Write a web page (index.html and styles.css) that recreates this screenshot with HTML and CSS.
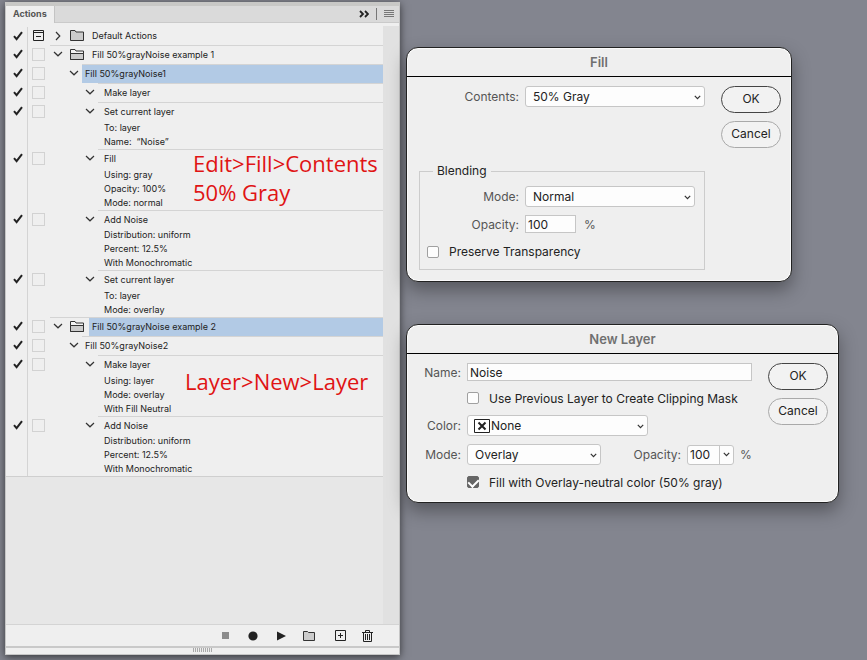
FILE: index.html
```html
<!DOCTYPE html>
<html lang="en">
<head>
    <meta charset="UTF-8">
    <meta name="viewport" content="width=device-width, initial-scale=1.0">
    <title>Fill 50% Gray Noise Actions</title>
    <link rel="stylesheet" href="styles.css">
</head>
<body>
    <svg class="defs" aria-hidden="true">
        <symbol id="check" viewBox="0 0 10 10"><path d="M1 5.2L3.6 8.2L9 1.2" fill="none" stroke="#222" stroke-width="2"/></symbol>
        <symbol id="down" viewBox="0 0 10 6"><path d="M1 1L5 4.8L9 1" fill="none" stroke="#333" stroke-width="1.2"/></symbol>
        <symbol id="right" viewBox="0 0 6 10"><path d="M1 1L4.8 5L1 9" fill="none" stroke="#333" stroke-width="1.2"/></symbol>
        <symbol id="caret" viewBox="0 0 7 5"><path d="M0.8 0.8L3.5 3.6L6.2 0.8" fill="none" stroke="#333" stroke-width="1.2"/></symbol>
        <symbol id="folder" viewBox="0 0 14 11"><path d="M.5 10.5V.5H5L6 2H13.5V10.5Z" fill="#ccc" stroke="#333"/></symbol>
        <symbol id="folder-open" viewBox="0 0 14 11"><path d="M.5 10.5V.5H5L6 2H13.5V10.5Z" fill="#f4f4f4" stroke="#333"/><path d="M.5 4.5H13.5V10.5H.5Z" fill="#ccc" stroke="#333"/></symbol>
    </svg>

    <section class="panel">
        <header class="tabs">
            <h2 class="tab">Actions</h2>
            <div class="tab-tools">
                <svg width="10" height="8" viewBox="0 0 10 8"><path d="M1 1L4 4L1 7M6 1L9 4L6 7" fill="none" stroke="#222" stroke-width="1.8"/></svg>
                <span class="divider"></span>
                <svg width="10" height="8" viewBox="0 0 10 8"><path d="M0 .5H10M0 2.5H10M0 4.5H10M0 6.5H10" stroke="#777"/></svg>
            </div>
        </header>

        <div class="content">
            <div class="list">
                <div class="row folder">
                    <span class="mark"><svg width="10" height="10"><use href="#check"/></svg></span>
                    <span class="modal"><svg width="11" height="11" viewBox="0 0 11 11"><path d="M.5 .5H10.5V10.5H.5ZM.5 2.5H10.5M3 6.5H8" fill="none" stroke="#222"/></svg></span>
                    <div class="body first"><svg class="arrow" width="6" height="10"><use href="#right"/></svg><svg class="icon" width="14" height="11"><use href="#folder"/></svg><div class="label">Default Actions</div></div>
                </div>
                <div class="row folder">
                    <span class="mark"><svg width="10" height="10"><use href="#check"/></svg></span>
                    <span class="modal"><i class="box"></i></span>
                    <div class="body"><svg class="arrow" width="10" height="6"><use href="#down"/></svg><svg class="icon" width="14" height="11"><use href="#folder-open"/></svg><div class="label">Fill 50%grayNoise example 1</div></div>
                </div>
                <div class="row action">
                    <span class="mark"><svg width="10" height="10"><use href="#check"/></svg></span>
                    <span class="modal"><i class="box"></i></span>
                    <div class="body"><svg class="arrow" width="10" height="6"><use href="#down"/></svg><div class="label selected">Fill 50%grayNoise1</div></div>
                </div>
                <div class="row step">
                    <span class="mark"><svg width="10" height="10"><use href="#check"/></svg></span>
                    <span class="modal"><i class="box"></i></span>
                    <div class="body"><svg class="arrow" width="10" height="6"><use href="#down"/></svg><div class="label">Make layer</div></div>
                </div>
                <div class="row step">
                    <span class="mark"><svg width="10" height="10"><use href="#check"/></svg></span>
                    <span class="modal"><i class="box"></i></span>
                    <div class="body"><svg class="arrow" width="10" height="6"><use href="#down"/></svg><div class="label">Set current layer
                        <p>To: layer</p>
                        <p>Name: &nbsp;“Noise”</p></div></div>
                </div>
                <div class="row step">
                    <span class="mark"><svg width="10" height="10"><use href="#check"/></svg></span>
                    <span class="modal"><i class="box"></i></span>
                    <div class="body"><svg class="arrow" width="10" height="6"><use href="#down"/></svg><div class="label">Fill
                        <p>Using: gray</p>
                        <p>Opacity: 100%</p>
                        <p>Mode: normal</p></div></div>
                    <div class="note note-fill">Edit&gt;Fill&gt;Contents<br>50% Gray</div>
                </div>
                <div class="row step filter">
                    <span class="mark"><svg width="10" height="10"><use href="#check"/></svg></span>
                    <span class="modal"><i class="box"></i></span>
                    <div class="body"><svg class="arrow" width="10" height="6"><use href="#down"/></svg><div class="label">Add Noise
                        <p>Distribution: uniform</p>
                        <p>Percent: 12.5%</p>
                        <p>With Monochromatic</p></div></div>
                </div>
                <div class="row step">
                    <span class="mark"><svg width="10" height="10"><use href="#check"/></svg></span>
                    <span class="modal"><i class="box"></i></span>
                    <div class="body"><svg class="arrow" width="10" height="6"><use href="#down"/></svg><div class="label">Set current layer
                        <p>To: layer</p>
                        <p>Mode: overlay</p></div></div>
                </div>
                <div class="row folder">
                    <span class="mark"><svg width="10" height="10"><use href="#check"/></svg></span>
                    <span class="modal"><i class="box"></i></span>
                    <div class="body"><svg class="arrow" width="10" height="6"><use href="#down"/></svg><svg class="icon" width="14" height="11"><use href="#folder-open"/></svg><div class="label selected">Fill 50%grayNoise example 2</div></div>
                </div>
                <div class="row action">
                    <span class="mark"><svg width="10" height="10"><use href="#check"/></svg></span>
                    <span class="modal"><i class="box"></i></span>
                    <div class="body"><svg class="arrow" width="10" height="6"><use href="#down"/></svg><div class="label">Fill 50%grayNoise2</div></div>
                </div>
                <div class="row step">
                    <span class="mark"><svg width="10" height="10"><use href="#check"/></svg></span>
                    <span class="modal"><i class="box"></i></span>
                    <div class="body"><svg class="arrow" width="10" height="6"><use href="#down"/></svg><div class="label">Make layer
                        <p>Using: layer</p>
                        <p>Mode: overlay</p>
                        <p>With Fill Neutral</p></div></div>
                    <div class="note note-layer">Layer&gt;New&gt;Layer</div>
                </div>
                <div class="row step filter">
                    <span class="mark"><svg width="10" height="10"><use href="#check"/></svg></span>
                    <span class="modal"><i class="box"></i></span>
                    <div class="body"><svg class="arrow" width="10" height="6"><use href="#down"/></svg><div class="label">Add Noise
                        <p>Distribution: uniform</p>
                        <p>Percent: 12.5%</p>
                        <p>With Monochromatic</p></div></div>
                </div>
            </div>
            <div class="scroll"></div>
        </div>

        <footer class="tools">
            <button aria-label="Stop"><svg width="7" height="7"><path d="M0 0H7V7H0Z" fill="#8c8c8c"/></svg></button>
            <button aria-label="Record"><svg width="10" height="10"><circle cx="5" cy="5" r="4.6" fill="#222"/></svg></button>
            <button aria-label="Play"><svg width="9" height="10"><path d="M0 .5L9 5L0 9.5Z" fill="#222"/></svg></button>
            <button aria-label="New set"><svg width="12" height="10"><path d="M.5 9.5V.5H4.5L5.5 1.5H11.5V9.5Z" fill="#ccc" stroke="#333"/></svg></button>
            <button class="wide" aria-label="New action"><svg width="11" height="11"><path d="M.5 .5H10.5V10.5H.5ZM5.5 3V8M3 5.5H8" fill="none" stroke="#222"/></svg></button>
            <button class="narrow" aria-label="Delete"><svg width="11" height="12"><path d="M0 2.5H11M3.5 2V.5H7.5V2M1.5 2.5V11.5H9.5V2.5M3.5 4V10M5.5 4V10M7.5 4V10" fill="none" stroke="#222"/></svg></button>
        </footer>
        <div class="grip"><span></span></div>
    </section>

    <main class="dialogs">
        <form class="dialog fill">
            <h2>Fill</h2>
            <div class="dialog-body">
                <div class="fields">
                    <div class="line">
                        <label for="contents">Contents:</label>
                        <span class="select"><select id="contents"><option>50% Gray</option></select><svg width="7" height="5"><use href="#caret"/></svg></span>
                    </div>
                    <fieldset>
                        <legend>Blending</legend>
                        <div class="line">
                            <label for="fill-mode">Mode:</label>
                            <span class="select"><select id="fill-mode"><option>Normal</option></select><svg width="7" height="5"><use href="#caret"/></svg></span>
                        </div>
                        <div class="line">
                            <label for="fill-opacity">Opacity:</label>
                            <input class="text short" type="text" id="fill-opacity" value="100">
                            <span class="unit">%</span>
                        </div>
                        <div class="tick">
                            <input type="checkbox" id="preserve">
                            <label for="preserve">Preserve Transparency</label>
                        </div>
                    </fieldset>
                </div>
                <div class="buttons">
                    <button type="button" class="primary">OK</button>
                    <button type="button">Cancel</button>
                </div>
            </div>
        </form>

        <form class="dialog layer">
            <h2>New Layer</h2>
            <div class="dialog-body">
                <div class="fields">
                    <div class="line">
                        <label for="name">Name:</label>
                        <input class="text" type="text" id="name" value="Noise">
                    </div>
                    <div class="tick">
                        <input type="checkbox" id="clip">
                        <label for="clip">Use Previous Layer to Create Clipping Mask</label>
                    </div>
                    <div class="line">
                        <label for="color">Color:</label>
                        <span class="select color"><svg class="swatch" width="16" height="14"><path d="M.5 .5H15.5V13.5H.5Z" fill="#fff" stroke="#222"/><path d="M4.5 3.5L11.5 10.5M11.5 3.5L4.5 10.5" stroke="#222" stroke-width="2"/></svg><select id="color"><option>None</option></select><svg width="7" height="5"><use href="#caret"/></svg></span>
                    </div>
                    <div class="line">
                        <label for="layer-mode">Mode:</label>
                        <span class="select mode"><select id="layer-mode"><option>Overlay</option></select><svg width="7" height="5"><use href="#caret"/></svg></span>
                        <label class="opacity" for="layer-opacity">Opacity:</label>
                        <span class="combo"><input type="text" id="layer-opacity" value="100"><button type="button" aria-label="Opacity slider"><svg width="7" height="5"><use href="#caret"/></svg></button></span>
                        <span class="unit">%</span>
                    </div>
                    <div class="tick">
                        <input type="checkbox" id="neutral" checked>
                        <label for="neutral">Fill with Overlay-neutral color (50% gray)</label>
                    </div>
                </div>
                <div class="buttons">
                    <button type="button" class="primary">OK</button>
                    <button type="button">Cancel</button>
                </div>
            </div>
        </form>
    </main>
</body>
</html>
```
FILE: styles.css
```css
* {
    box-sizing: border-box;
}
body {
    margin: 0;
    min-height: 100vh;
    display: flex;
    align-items: stretch;
    background: #83858f;
    font-family: Inter, "Liberation Sans", sans-serif;
    font-size: 12px;
    color: #222;
}
h2, p {
    margin: 0;
}
svg {
    display: block;
    flex: none;
}
.defs {
    position: absolute;
    width: 0;
    height: 0;
}

/* actions panel */
.panel {
    flex: 0 1 395px;
    margin: 2px 0 5px 5px;
    display: flex;
    flex-direction: column;
    background: #efefef;
    border: 1px solid #c6c6c6;
    border-top: 4px solid #c8c8c6;
    box-shadow: 0 2px 8px rgba(0,0,0,0.6);
    font-size: 9px;
}
.tabs {
    display: flex;
    justify-content: space-between;
    height: 17px;
    background: #dadada;
    border-bottom: 1px solid #cacaca;
}
.tab {
    height: 17px;
    padding: 0 7px;
    background: #efefef;
    border-right: 1px solid #c4c4c4;
    font-size: 9px;
    line-height: 16px;
    font-weight: 700;
    color: #555;
}
.tab-tools {
    display: flex;
    align-items: center;
    gap: 7px;
    padding-right: 5px;
}
.divider {
    width: 1px;
    height: 12px;
    background: #777;
}
.content {
    flex: 1;
    display: flex;
    margin-top: 3px;
    background: #e7e7e7;
}
.list {
    flex: 1;
    align-self: flex-start;
    padding-top: 1px;
    background: #efefef;
    border-bottom: 1px solid #cfcfcf;
}
.scroll {
    width: 16px;
    background: #e1e1e1;
}
.row {
    position: relative;
    display: flex;
    line-height: 18px;
}
.mark {
    width: 22px;
    padding: 4px 0 0 7px;
    border-right: 1px solid #d4d4d4;
}
.modal {
    display: flex;
    justify-content: center;
    width: 22px;
    padding: 3px 1px 0 0;
}
.box {
    width: 13px;
    height: 13px;
    border: 1px solid #d2d2d2;
}
.body {
    flex: 1;
    display: flex;
}
.arrow {
    margin: 6px 0 0 3px;
}
.label {
    flex: 1;
    padding-left: 3px;
    border-top: 1px solid #d4d4d4;
}
.label p {
    line-height: 14px;
}
.selected {
    background: #b2cae5;
    background-clip: padding-box;
}
.folder .body {
    border-top: 1px solid #d4d4d4;
}
.folder .body.first {
    border-top: 0;
}
.folder .label {
    border-top: 0;
}
.folder .icon {
    margin: 3px 5px 0 7px;
}
.folder .arrow {
    margin-top: 5px;
}
.folder .first .arrow {
    margin: 4px 2px 0 5px;
}
.action .arrow {
    margin: 6px 3px 0 19px;
}
.step .arrow {
    margin: 6px 3px 0 35px;
}
.step .label {
    padding-left: 6px;
}
.filter {
    line-height: 17px;
}
.note {
    position: absolute;
    font-family: "Open Sans", sans-serif;
    font-size: 22px;
    line-height: 29px;
    color: #e01414;
    white-space: nowrap;
}
.note-fill {
    left: 187px;
    top: 0;
}
.note-layer {
    left: 179px;
    top: 12px;
}
.tools {
    display: flex;
    justify-content: flex-end;
    align-items: center;
    padding-right: 22px;
    height: 22px;
    border-top: 1px solid #d4d4d4;
}
.tools button {
    display: flex;
    justify-content: center;
    width: 28px;
    padding: 0;
    border: 0;
    background: none;
}
.tools .wide {
    width: 34px;
}
.tools .narrow {
    width: 20px;
}
.grip {
    height: 8px;
    border-top: 2px solid #c9c9c9;
    display: flex;
    justify-content: center;
}
.grip span {
    width: 19px;
    height: 4px;
    background: repeating-linear-gradient(90deg, #aaa 0, #aaa 1px, #eee 1px, #eee 2px);
}

/* dialogs */
.dialogs {
    flex: 1;
    padding: 47px 28px 0 6px;
    display: flex;
    flex-direction: column;
    gap: 42px;
}
.dialog {
    background: #efefef;
    border: 1px solid #222;
    border-radius: 12px;
    box-shadow: inset 0 0 0 1px #fafafa, 0 8px 18px rgba(0,0,0,0.35);
}
.dialog.fill {
    max-width: 386px;
}
.dialog.layer {
    max-width: 433px;
}
.dialog h2 {
    height: 29px;
    border-bottom: 1px solid #000;
    font-size: 13px;
    line-height: 28px;
    font-weight: 600;
    text-align: center;
    color: #707070;
}
.dialog-body {
    display: flex;
    gap: 16px;
    padding: 9px 10px 11px 12px;
}
.fields {
    flex: 1;
    display: flex;
    flex-direction: column;
}
.line {
    display: flex;
    align-items: center;
}
.line label {
    flex: none;
    padding-right: 6px;
    text-align: right;
    color: #555;
}
.unit {
    color: #555;
}
.select {
    position: relative;
    flex: 1;
}
.select select {
    display: block;
    width: 100%;
    height: 21px;
    padding: 0 7px;
    appearance: none;
    background: #fdfdfd;
    border: 1px solid #c6c6c6;
    border-radius: 3px;
    font: inherit;
    color: #222;
}
.select svg {
    position: absolute;
    right: 4px;
    top: 9px;
}
.select .swatch {
    left: 7px;
    top: 4px;
}
.text {
    flex: 1;
    min-width: 0;
    height: 18px;
    padding: 0 2px;
    background: #fdfdfd;
    border: 1px solid #c6c6c6;
    font: inherit;
    color: #222;
}
.text.short {
    flex: none;
    width: 51px;
}
.tick {
    display: flex;
    align-items: center;
    gap: 10px;
}
.tick input {
    appearance: none;
    width: 12px;
    height: 12px;
    margin: 0;
    background: #fdfdfd;
    border: 1px solid #a0a0a0;
    border-radius: 2px;
}
.tick input:checked {
    display: flex;
    justify-content: center;
    background: #666;
    border-color: #666;
}
.tick input:checked::after {
    content: "";
    width: 5px;
    height: 8px;
    border: solid #fff;
    border-width: 0 2px 2px 0;
    transform: rotate(45deg);
}
.buttons {
    display: flex;
    flex-direction: column;
    gap: 8px;
}
.buttons button {
    width: 60px;
    height: 27px;
    padding: 0 0 2px;
    background: #f2f2f2;
    border: 1px solid #a9a9a9;
    border-radius: 14px;
    font: inherit;
    color: #222;
}
.buttons .primary {
    border-color: #444;
}
.fill .line label {
    width: 106px;
}
.fill fieldset {
    display: flex;
    flex-direction: column;
    gap: 8px;
    margin: 56px 0 0;
    padding: 7px 9px 10px 7px;
    border: 1px solid #ccc;
}
.fill legend {
    margin-left: 6px;
    padding: 0 4px;
    line-height: 16px;
}
.fill fieldset .line label {
    width: 98px;
}
.fill .unit {
    margin-left: 8px;
}
.fill .tick {
    margin-top: 3px;
}
.layer .fields {
    gap: 8px;
}
.layer .line label {
    width: 48px;
}
.layer .tick {
    height: 18px;
    padding-left: 48px;
}
.layer .color {
    flex: none;
    width: 181px;
}
.color select {
    padding-left: 23px;
}
.layer .mode {
    flex: none;
    width: 134px;
}
.layer .line .opacity {
    width: 86px;
}
.combo {
    display: flex;
    width: 47px;
    height: 20px;
    background: #fdfdfd;
    border: 1px solid #c6c6c6;
    border-radius: 3px;
}
.combo input {
    width: 32px;
    padding: 0 2px;
    border: 0;
    border-right: 1px solid #c6c6c6;
    background: none;
    font: inherit;
    color: #222;
}
.combo button {
    flex: 1;
    display: flex;
    align-items: center;
    justify-content: center;
    padding: 0;
    border: 0;
    background: none;
}
.layer .unit {
    margin-left: 6px;
}
```
